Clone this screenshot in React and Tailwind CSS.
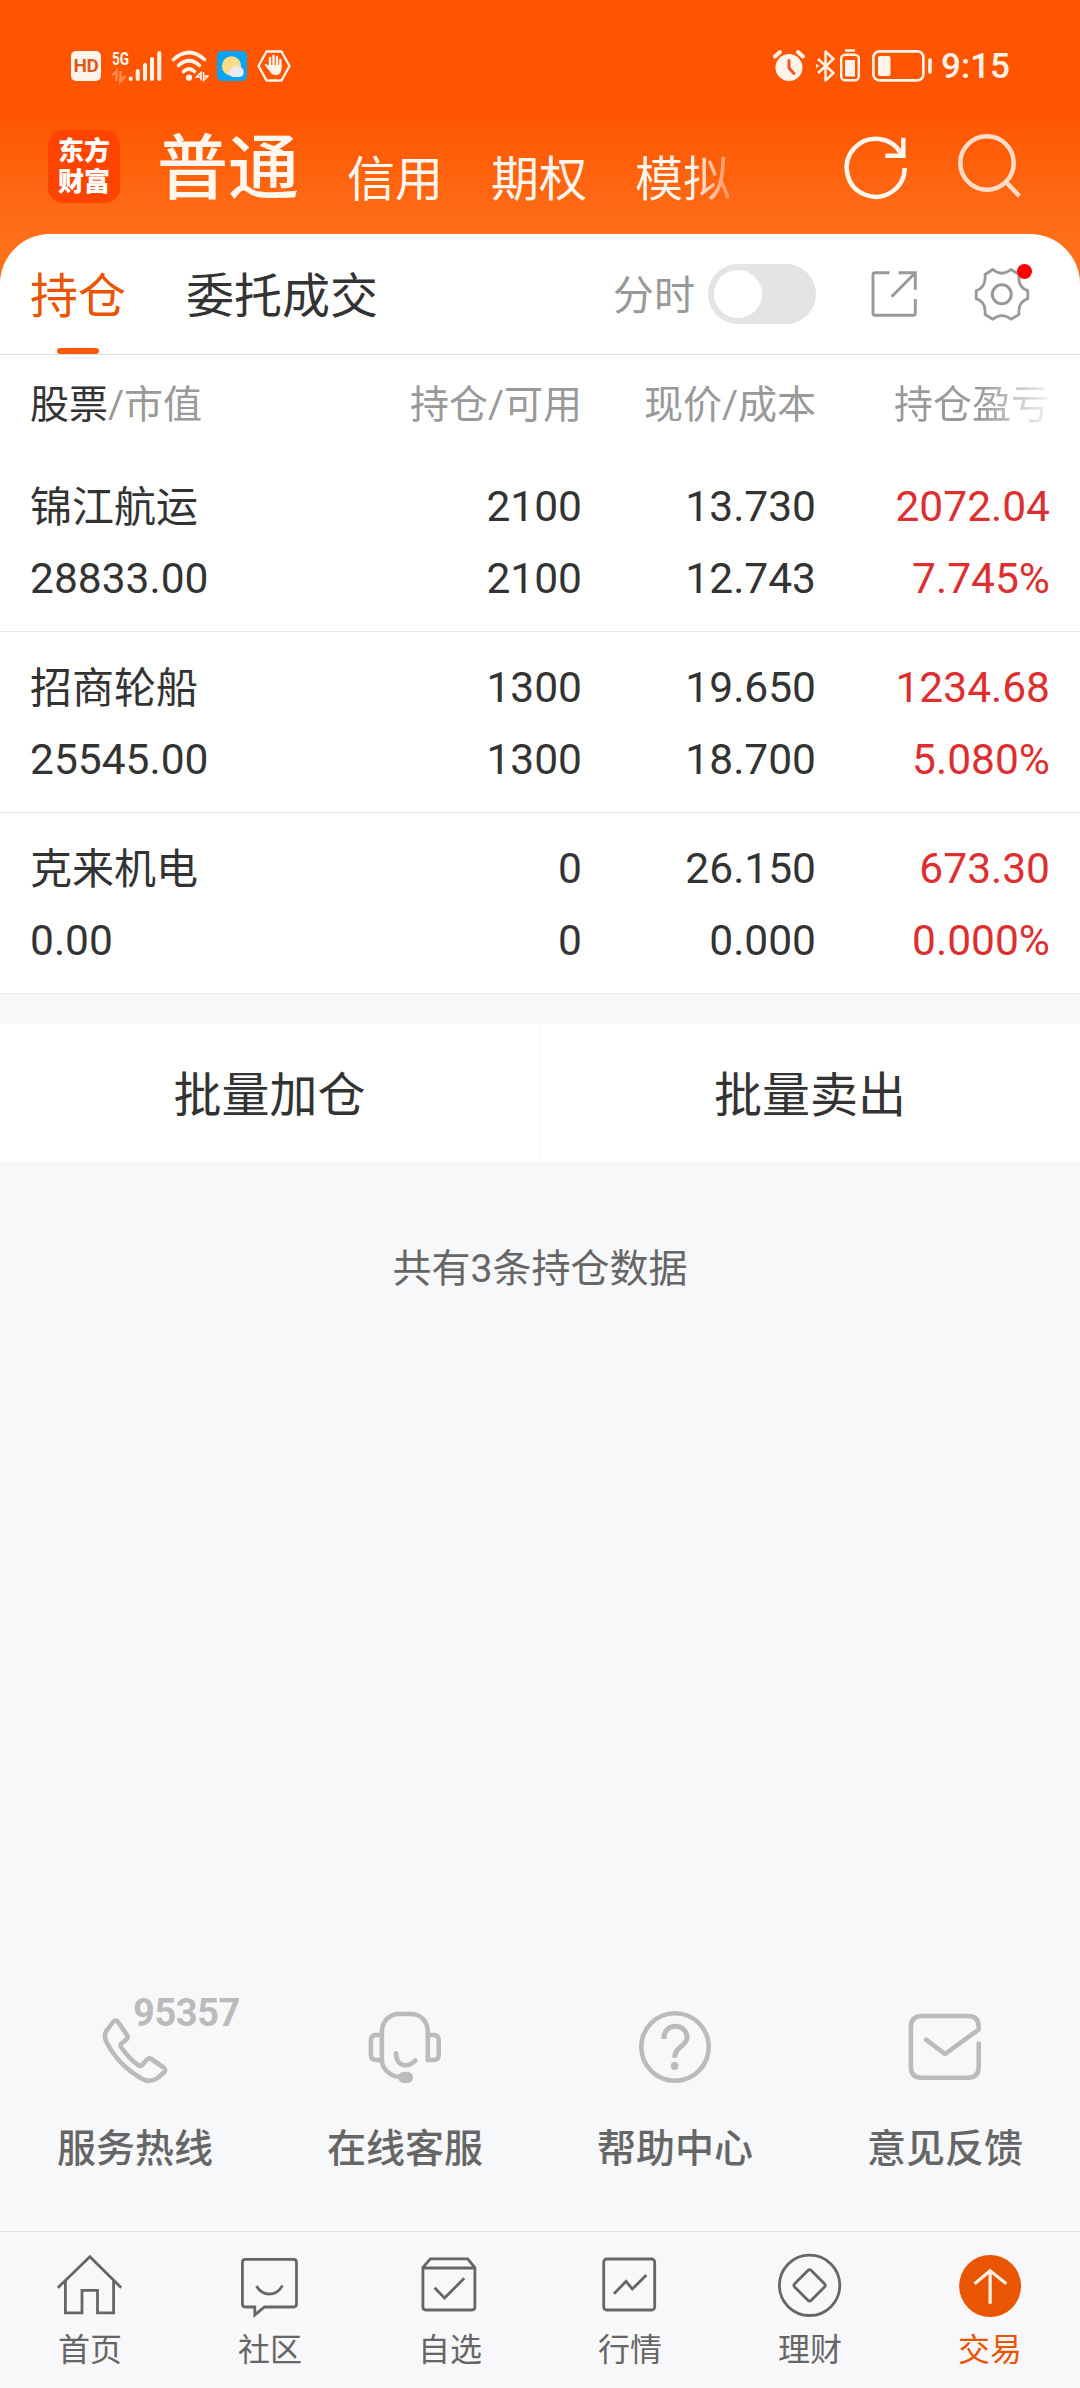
import React from 'react';

const holdings = [
  { name: "锦江航运", value: "28833.00", amount: "2100", usable: "2100", price: "13.730", cost: "12.743", profit: "2072.04", rate: "7.745%" },
  { name: "招商轮船", value: "25545.00", amount: "1300", usable: "1300", price: "19.650", cost: "18.700", profit: "1234.68", rate: "5.080%" },
  { name: "克来机电", value: "0.00", amount: "0", usable: "0", price: "26.150", cost: "0.000", profit: "673.30", rate: "0.000%" },
];

function StatusBar() {
  return (
    <div className="flex h-[131px] items-center justify-between pl-[71px] pr-[70px] text-[#fff3ea]">
      <div className="flex items-center">
        <span className="flex h-[30px] w-[30px] items-center justify-center rounded-[5px] bg-[#fff3ea] text-[19px] font-bold leading-none tracking-[-0.5px] text-[#d9591b]">
          HD
        </span>
        <svg className="ml-[11px] overflow-visible" width="50" height="34" viewBox="0 0 50 34" fill="none">
          <text x="0" y="15.500" fontSize="19" fontWeight="700" textLength="17" lengthAdjust="spacingAndGlyphs" fill="currentColor">5G</text>
          <path d="M0.5 26.5 4.5 22V32M8.5 22V32L13.5 27" stroke="#ff8b4d" strokeWidth="2.6" />
          <path d="M18.7 29.5V30M25.7 22V30M33 16V30M40 10V30M47.3 4V30" stroke="currentColor" strokeWidth="4" strokeLinecap="round" />
        </svg>
        <svg className="ml-[9px]" width="38" height="34" viewBox="0 0 38 34" fill="none" stroke="currentColor" strokeLinecap="round">
          <path d="M2.5 10.5Q18 -3.5 33.5 10.5" strokeWidth="3.6" />
          <path d="M7.5 16.5Q18 7 28.5 16.5" strokeWidth="3.6" />
          <path d="M12.5 22.5Q18 17.5 23.5 22.5" strokeWidth="3.6" />
          <circle cx="18" cy="28.7" r="3.1" fill="currentColor" stroke="none" />
          <path d="M25.5 28H30V23.5ZM32.5 23V31.5L37 27H32.5M30 28V31.5" strokeWidth="1.5" strokeLinecap="butt" />
        </svg>
        <svg className="ml-[8px]" width="30" height="30" viewBox="0 0 30 30">
          <rect width="30" height="30" rx="5" fill="#0aa5f2" />
          <circle cx="14.5" cy="15" r="9.7" fill="#fbdc86" />
          <path d="M15.500 26a4.300 4.300 0 0 1-.6-8.200 5.200 5.200 0 0 1 8-1.500 5 5 0 0 1 .2 9.700Z" fill="#e8ebf2" />
        </svg>
        <svg className="ml-[10px]" width="34" height="34" viewBox="0 0 34 34" fill="none" stroke="currentColor">
          <path d="M9.5 2.500H24.500L32.500 17L24.500 31.500H9.500L1.500 17Z" strokeWidth="2.4" strokeLinejoin="round" />
          <path d="M13 18V9M16.500 17V7M20 17V8M23.300 18V11M13 20 9 16" strokeWidth="2.4" strokeLinecap="round" />
          <path d="M11.800 16H24.500V20Q24 26 18.500 26Q15.500 26 14 24L9.500 18Z" fill="currentColor" stroke="none" />
        </svg>
      </div>
      <div className="flex items-center">
        <svg width="32" height="34" viewBox="0 0 32 34" fill="none">
          <circle cx="16" cy="18.5" r="13.5" fill="currentColor" />
          <path d="M2 7.5 7 3M30 7.5 25 3" stroke="currentColor" strokeWidth="4" strokeLinecap="round" />
          <path d="M16 11.5V19L21 24.500" stroke="#f0581a" strokeWidth="3" strokeLinecap="round" strokeLinejoin="round" />
        </svg>
        <svg className="ml-[11px]" width="20" height="34" viewBox="0 0 20 34" fill="none" stroke="currentColor" strokeWidth="2.4" strokeLinejoin="round">
          <path d="M2 10 17.500 24 9.500 31.500V2.500L17.500 10 2 24" />
          <path d="M.5 15.500V18.500L2.500 17Z" strokeWidth="1" fill="currentColor" />
        </svg>
        <svg className="ml-[4px]" width="20" height="34" viewBox="0 0 20 34" fill="none">
          <path d="M5 1.500H15" stroke="currentColor" strokeWidth="2.5" />
          <rect x="1.2" y="5.7" width="17.6" height="25.5" rx="4" stroke="currentColor" strokeWidth="2.4" />
          <rect x="5" y="11" width="10" height="16.5" fill="currentColor" />
        </svg>
        <svg className="ml-[12px]" width="61" height="34" viewBox="0 0 61 34" fill="none">
          <rect x="1.4" y="2.4" width="50" height="29" rx="6" stroke="currentColor" strokeWidth="2.6" />
          <rect x="6" y="7" width="12.5" height="20" rx="2" fill="currentColor" />
          <path d="M58 11V23" stroke="currentColor" strokeWidth="3.6" strokeLinecap="round" />
        </svg>
        <span className="ml-[8px] pt-[2px] text-[35px] font-medium leading-none">9:15</span>
      </div>
    </div>
  );
}

function TopNav() {
  return (
    <div className="flex h-[103px] items-start pl-[48px] text-[#fff6ee]">
      <div className="-mt-px flex h-[73px] w-[72px] flex-col items-center justify-center rounded-[15px] bg-[#ff4400] text-[26px] font-black leading-[31px] text-white">
        <span>东方</span>
        <span>财富</span>
      </div>
      <span className="ml-[37px] mt-[2px] text-[71px] font-medium leading-[72px]">普通</span>
      <div className="ml-[48px] mt-[13px] flex gap-[48px] text-[48px] leading-[72px]">
        <span>信用</span>
        <span>期权</span>
        <span className="bg-linear-to-r from-[#fff6ee] from-60% to-[#ff8c4d] bg-clip-text text-transparent">模拟</span>
      </div>
      <svg className="ml-auto" width="72" height="72" viewBox="0 0 72 72" fill="none" stroke="currentColor" strokeWidth="4.5">
        <path d="M64.7 37A29 29 0 1 1 61.5 23.5" />
        <path d="M63.3 6.7V24.7H45.4" />
      </svg>
      <svg className="ml-[39px] mr-[57px]" width="72" height="72" viewBox="0 0 72 72" fill="none" stroke="#ffdcc6" strokeWidth="4.5">
        <circle cx="36" cy="32" r="26.7" />
        <path d="M54.5 50.5 68.3 65" />
      </svg>
    </div>
  );
}

function PanelTabs() {
  return (
    <div className="flex h-[121px] items-center border-b border-[#dedede] pl-[30px]">
      <div className="relative flex h-full items-center pt-[6px] text-[48px] leading-none text-[#ea5504]">
        持仓
        <span className="absolute bottom-0 left-[27px] h-[6px] w-[42px] rounded-[3px] bg-[#f95a0a]" />
      </div>
      <span className="ml-[60px] pt-[6px] text-[48px] leading-none text-[#333333]">委托成交</span>
      <span className="ml-auto pt-[4px] text-[41px] leading-none text-[#999999]">分时</span>
      <div className="ml-[13px] flex h-[60px] w-[108px] items-center rounded-full bg-[#e4e4e7] px-[6px]">
        <span className="h-[48px] w-[48px] rounded-full bg-white" />
      </div>
      <svg className="ml-[48px]" width="60" height="60" viewBox="0 0 60 60" fill="none" stroke="#999999" strokeWidth="2.9">
        <path d="M25.5 8.7H11Q9 8.7 9 10.7V49.3Q9 51.3 11 51.3H49.3Q51.3 51.3 51.3 49.3V35" />
        <path d="M34.5 8.7H51.3V25.7M27.6 32.7 51.3 8.7" />
      </svg>
      <div className="relative ml-[48px] mr-[48px]">
        <svg width="60" height="60" viewBox="0 0 60 60" fill="none" stroke="#999999" strokeWidth="2.8" strokeLinejoin="round">
          <path d="M20.8 5.5Q29.8 13 39 5.5L47 10.5Q45.5 23.5 55.8 26.7V34.7Q45.5 38 47 50.5L39 55.2Q29.8 48 20.8 55.2L13 50.5Q14.5 38 4.2 34.7V26.7Q14.5 23 13 10.5Z" />
          <circle cx="29.8" cy="30.3" r="9.5" strokeWidth="3" />
        </svg>
        <span className="absolute left-[45px] top-0 h-[15px] w-[15px] rounded-full bg-[#ff0000]" />
      </div>
    </div>
  );
}

function Holdings() {
  return (
    <div>
      <div className="grid h-[96px] grid-cols-[282px_270px_234px_234px] items-center px-[30px] pt-[5px] text-right text-[39px] text-[#999999]">
        <span className="text-left">
          <span className="text-[#333333]">股票</span>/市值
        </span>
        <span>持仓/可用</span>
        <span>现价/成本</span>
        <span>
          <span className="bg-linear-to-r from-[#999999] from-55% to-[#f4f4f4] bg-clip-text text-transparent">持仓盈亏</span>
        </span>
      </div>
      {holdings.map((item) => (
        <div
          key={item.name}
          className="grid h-[181px] grid-cols-[282px_270px_234px_234px] grid-rows-[72px_72px] border-b border-[#ebebeb] px-[30px] pt-[20px] text-right text-[42.5px] leading-[72px] text-[#333333]"
        >
          <span className="pt-px text-left text-[42px]">{item.name}</span>
          <span>{item.amount}</span>
          <span>{item.price}</span>
          <span className="text-[#dd2f2f]">{item.profit}</span>
          <span className="text-left">{item.value}</span>
          <span>{item.usable}</span>
          <span>{item.cost}</span>
          <span className="text-[#dd2f2f]">{item.rate}</span>
        </div>
      ))}
    </div>
  );
}

const services = [
  {
    label: "服务热线",
    badge: "95357",
    icon: (
      <path d="M18 15Q20.7 12 23 15L32 28Q33.5 30.3 31.5 32.3L26.5 36.5Q25 38.3 26.2 40.2Q33.5 51 43.5 58.3Q45.5 59.6 47.2 58L52 52.5Q54 50.3 56.5 52L68.5 60.5Q71.5 63 69 65.5L62.5 71Q55 76.5 46.5 71.5Q22.5 57.5 11 34Q8.8 29 11.3 24Z" />
    ),
  },
  {
    label: "在线客服",
    icon: (
      <>
        <path d="M16.9 53H11Q5.9 53 5.9 47.5V33.5Q5.9 28 11 28H16.9" />
        <path d="M34.4 70C24 69 16.9 61 16.9 53V25.5C16.9 14 24.5 7 34 7H46C55.5 7 62.8 14 62.8 25.5V53H68.5Q73.7 53 73.7 47.5V33.5Q73.7 28 68.5 28H62.8" />
        <path d="M31 46.3C31 59.5 42.5 61.5 50.3 53.5" strokeLinecap="round" />
        <rect x="33.4" y="64.7" width="14.5" height="11.3" rx="5.5" fill="#bbbbbb" stroke="none" />
      </>
    ),
  },
  {
    label: "帮助中心",
    icon: (
      <>
        <circle cx="40" cy="40" r="33.7" />
        <path d="M29 32V30.5C29 15.5 52 15.5 52 30.5C52 39 39.6 39.5 39.6 50.8" strokeWidth="5" />
        <circle cx="39.6" cy="59" r="3.9" fill="#bbbbbb" stroke="none" />
      </>
    ),
  },
  {
    label: "意见反馈",
    icon: (
      <path d="M21 32.7 40 47 73.7 22.5V20Q73.7 9 62.7 9H16.9Q5.9 9 5.9 20V59.7Q5.9 70.7 16.9 70.7H62.7Q73.7 70.7 73.7 59.7V36.5" strokeLinecap="round" />
    ),
  },
];

function Services() {
  return (
    <div className="grid grid-cols-4 pb-[52px]">
      {services.map((item) => (
        <div key={item.label} className="flex flex-col items-center">
          <div className="relative">
            <svg width="80" height="80" viewBox="0 0 80 80" fill="none" stroke="#bbbbbb" strokeWidth="4.6" strokeLinejoin="round">
              {item.icon}
            </svg>
            {item.badge && (
              <span className="absolute left-[38px] top-[-13px] text-[38px] font-bold leading-[38px] tracking-[-0.4px] text-[#bbbbbb]">
                {item.badge}
              </span>
            )}
          </div>
          <span className="mt-[32px] text-[39px] font-medium leading-[60px] text-[#666666]">{item.label}</span>
        </div>
      ))}
    </div>
  );
}

const tabs = [
  {
    label: "首页",
    icon: (
      <>
        <path d="M3.9 37.7 35.9 6.7 67.2 37.7" />
        <path d="M11.4 31V62.9H28V40.3H43.5V62.9H59.6V31" />
      </>
    ),
  },
  {
    label: "社区",
    icon: (
      <>
        <path d="M11.4 9.3H59.5Q62.5 9.3 62.5 12.3V54Q62.5 57 59.5 57H30.5L20.8 65V57H11.4Q8.4 57 8.4 54V12.3Q8.4 9.3 11.4 9.3Z" />
        <path d="M22.5 36Q27 44 35.6 44T48.4 35.5" />
      </>
    ),
  },
  {
    label: "自选",
    icon: (
      <>
        <path d="M8.9 17.5 16.4 8.9H53.6L60.9 17.5V57Q60.9 60 57.9 60H11.9Q8.9 60 8.9 57ZM8.9 18H60.9" />
        <path d="M20.6 37.7 30.6 48 50.2 28.3" />
      </>
    ),
  },
  {
    label: "行情",
    icon: (
      <>
        <rect x="9.7" y="9" width="51" height="51" rx="3" />
        <path d="M20 43.7 32.1 31.3 38.3 39 52.4 25" />
      </>
    ),
  },
  {
    label: "理财",
    icon: (
      <>
        <circle cx="35.6" cy="35.3" r="30.2" />
        <path d="M33.9 20.5Q35.6 18.8 37.3 20.5L50.5 33.7Q52.2 35.4 50.5 37.1L37.3 50.3Q35.6 52 33.9 50.3L20.7 37.1Q19 35.4 20.7 33.7Z" />
      </>
    ),
  },
  {
    label: "交易",
    active: true,
    icon: (
      <>
        <circle cx="36.1" cy="36" r="31" fill="#ea5504" stroke="none" />
        <path d="M36.1 21V53.7M20.6 33.7 36.1 20.7 52.3 33.7" stroke="#fff3e6" strokeWidth="3.2" />
      </>
    ),
  },
];

function TabBar() {
  return (
    <nav className="grid h-[157px] grid-cols-6 border-t border-[#e2e2e4] bg-[#f8f8fa] pt-[18px]">
      {tabs.map((tab) => (
        <div key={tab.label} className={`flex flex-col items-center ${tab.active ? "text-[#ea5504]" : "text-[#666666]"}`}>
          <svg width="72" height="72" viewBox="0 0 72 72" fill="none" stroke="currentColor" strokeWidth="2.8">
            {tab.icon}
          </svg>
          <span className="mt-[8px] text-[32px] leading-[40px]">{tab.label}</span>
        </div>
      ))}
    </nav>
  );
}

export default function App() {
  return (
    <div className="flex h-[2388px] w-[1080px] flex-col overflow-hidden bg-[#f7f8fa] font-['Roboto','Noto_Sans_CJK_SC',sans-serif]">
      <header className="-mb-[50px] h-[284px] shrink-0 bg-linear-to-b from-[#ff5500] from-40% to-[#ff7019] to-85%">
        <StatusBar />
        <TopNav />
      </header>
      <main className="relative rounded-t-[50px] bg-white">
        <PanelTabs />
        <Holdings />
      </main>
      <div className="mt-[30px] grid h-[138px] grid-cols-2 bg-white text-[48px] text-[#333333]">
        <div className="flex items-center justify-center border-r border-[#f5f5f6] pt-[5px]">批量加仓</div>
        <div className="flex items-center justify-center pt-[5px]">批量卖出</div>
      </div>
      <p className="mt-[77px] text-center text-[39px] leading-[60px] text-[#666666]">共有3条持仓数据</p>
      <div className="mt-auto">
        <Services />
        <TabBar />
      </div>
    </div>
  );
}
